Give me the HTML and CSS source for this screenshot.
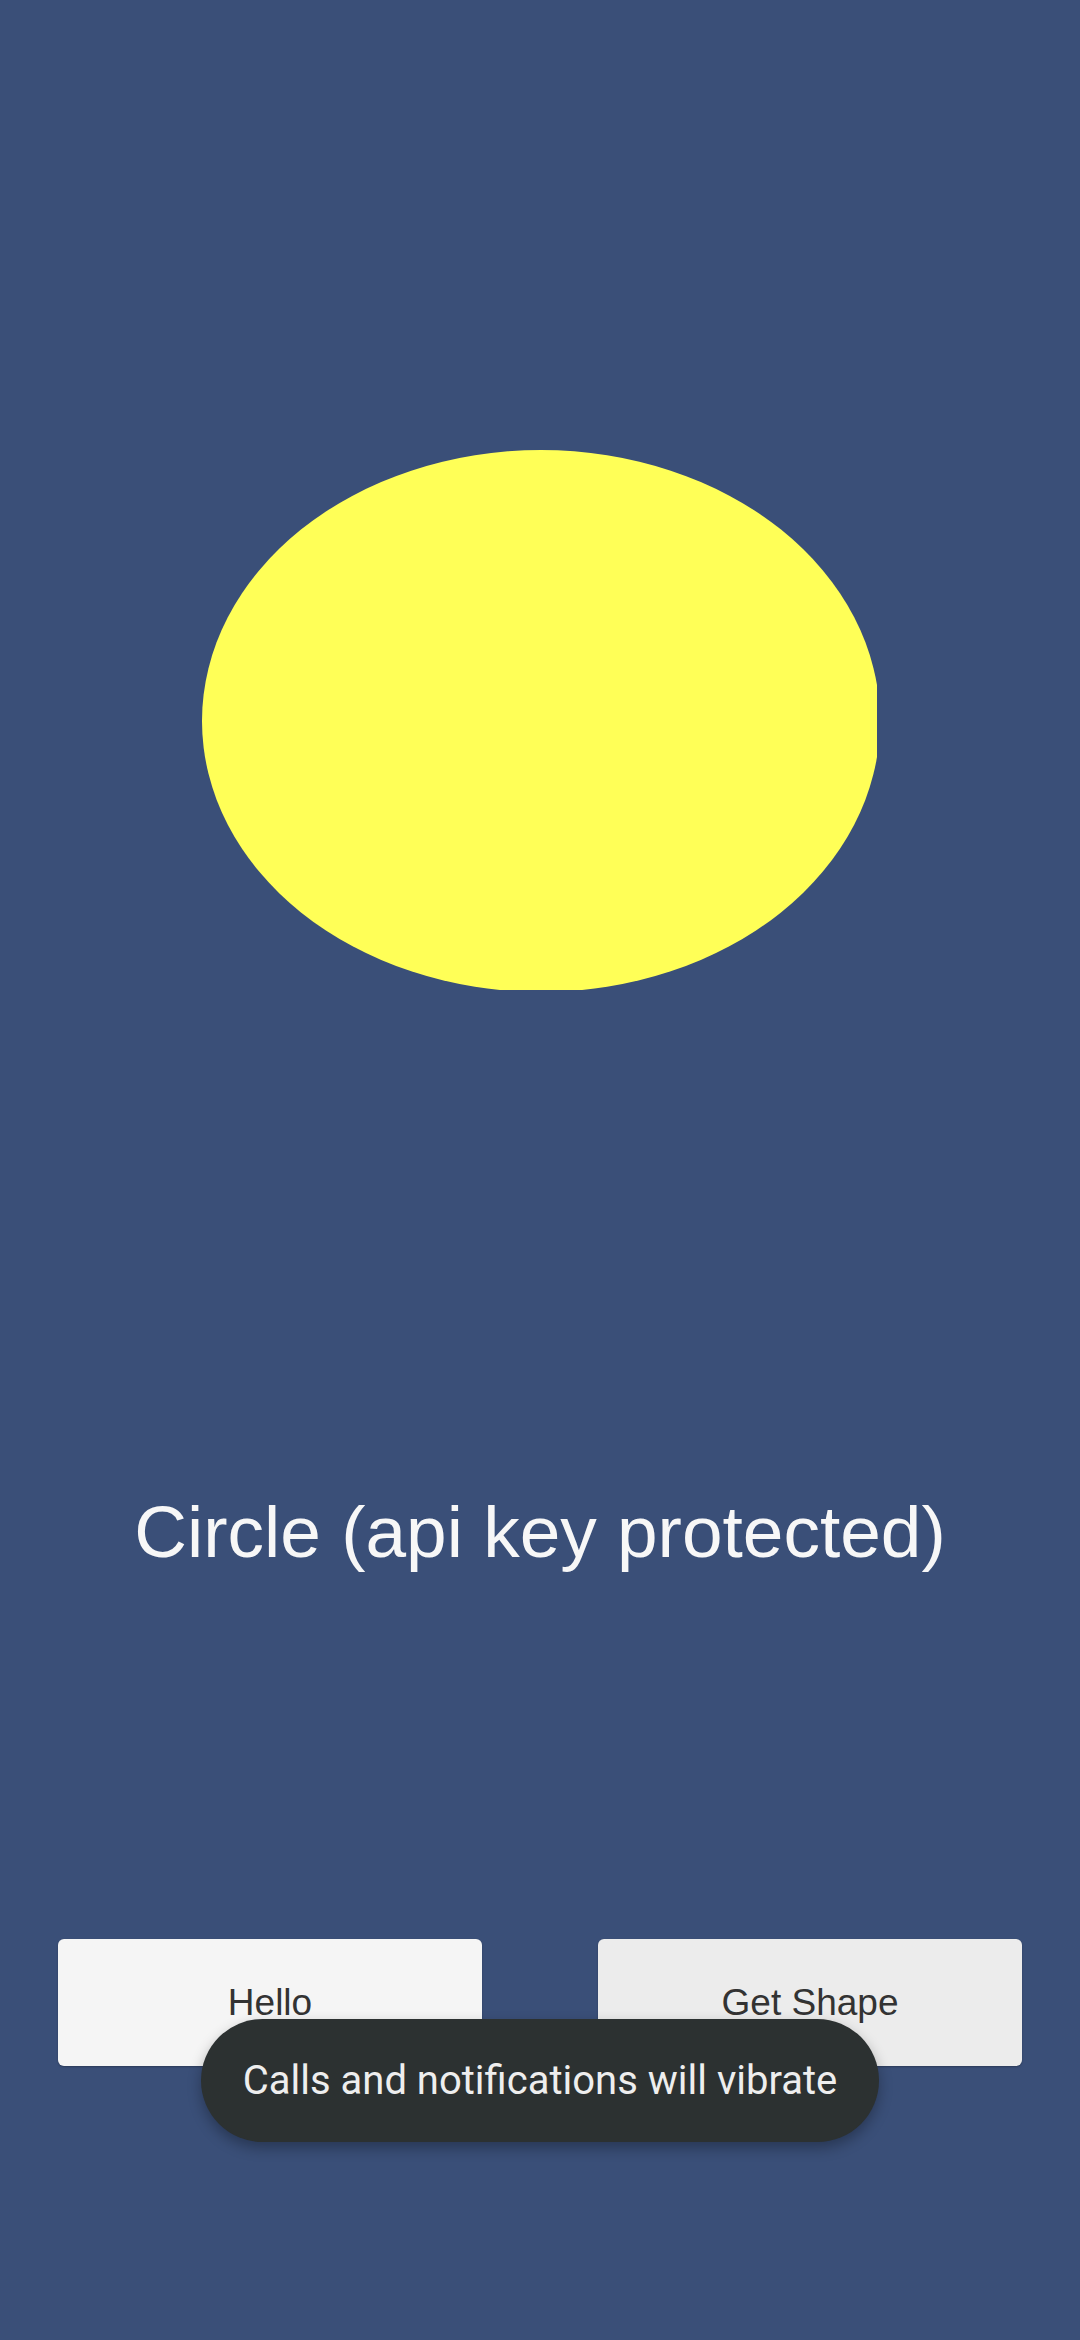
FILE: index.html
```html
<!DOCTYPE html>
<html>
<head>
<meta charset="utf-8">
<link rel="stylesheet" href="styles.css">
</head>
<body>
<main class="screen">
  <div class="shape-area">
    <svg class="shape" width="675" height="540" viewBox="0 0 675 540">
      <ellipse cx="339" cy="271" rx="339" ry="271" fill="#ffff57"/>
    </svg>
  </div>
  <div class="title">Circle (api key protected)</div>
  <div class="buttons">
    <button class="btn btn-hello">Hello</button>
    <button class="btn btn-shape">Get Shape</button>
  </div>
  <div class="toast">Calls and notifications will vibrate</div>
</main>
</body>
</html>
```
FILE: styles.css
```css
html, body {
  margin: 0;
  padding: 0;
  background: #3a4f78;
}
.screen {
  position: relative;
  width: 1080px;
  height: 2340px;
  display: flex;
  flex-direction: column;
  font-family: "Liberation Sans", Arial, sans-serif;
}
.shape-area {
  padding-top: 450px;
  padding-left: 202px;
  height: 540px;
}
.shape {
  display: block;
}
.title {
  margin-top: 499px;
  text-align: center;
  color: #f7f7f7;
  font-size: 73px;
  line-height: 85px;
}
.buttons {
  margin-top: 365px;
  display: flex;
  justify-content: space-between;
  padding: 0 58px;
}
.btn {
  width: 424px;
  height: 127px;
  border: none;
  border-radius: 6px;
  font-family: "Liberation Sans", Arial, sans-serif;
  font-size: 37px;
  color: #333333;
  padding: 0;
  box-shadow: 0 1px 2px rgba(0,0,0,0.25);
}
.btn-hello {
  background: #f5f5f5;
}
.btn-shape {
  background: #ececec;
}
.toast {
  position: absolute;
  left: 201px;
  top: 2019px;
  width: 678px;
  height: 123px;
  border-radius: 62px;
  background: #2c3131;
  color: #eeeeee;
  font-family: Roboto, "Noto Sans", sans-serif;
  font-size: 40px;
  display: flex;
  align-items: center;
  justify-content: center;
  box-shadow: 0 6px 14px rgba(0,0,0,0.3);
}
```
